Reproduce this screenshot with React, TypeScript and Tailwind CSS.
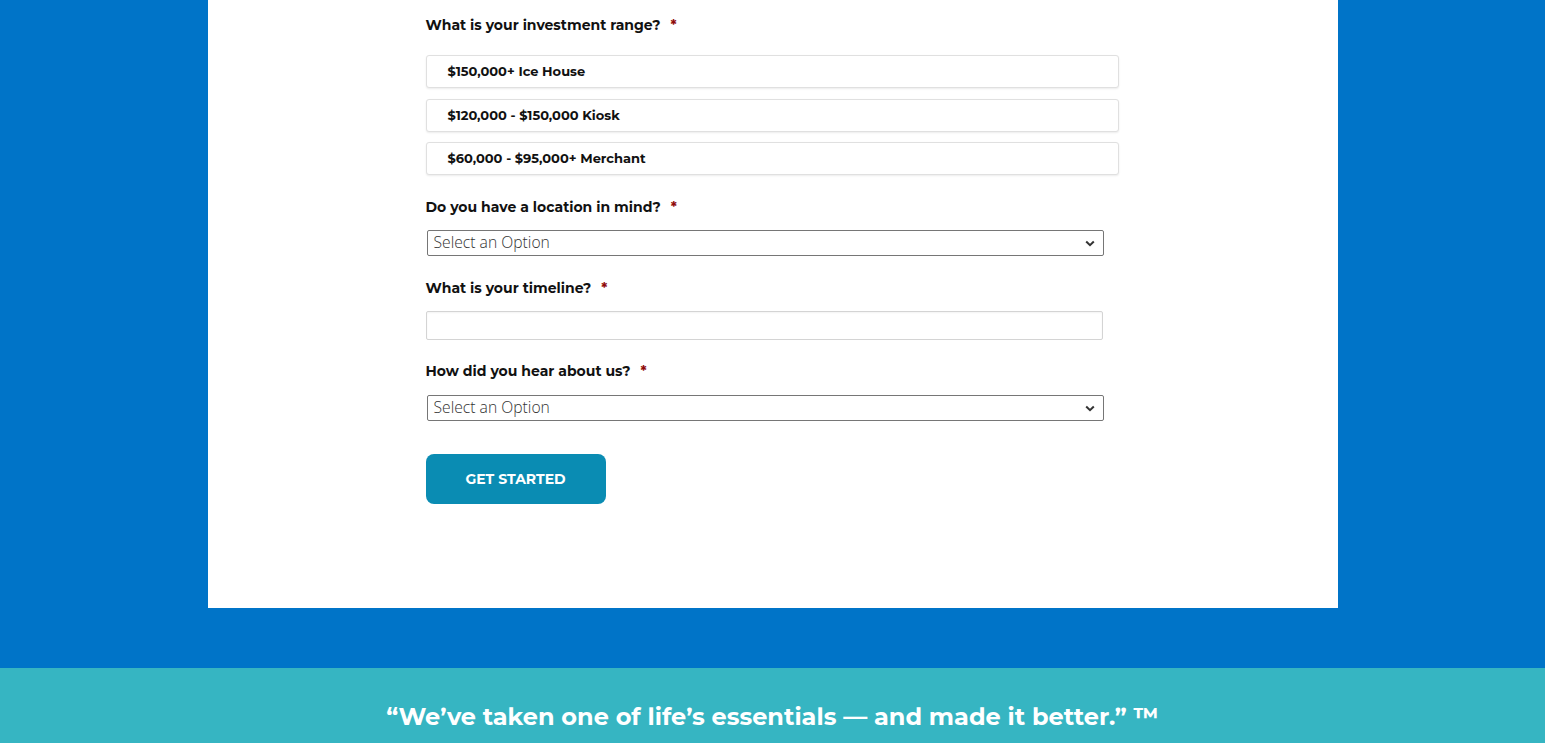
import React from "react";

const font = { fontFamily: "Montserrat, Inter, 'Open Sans', sans-serif" };

function Label({ text, className = "" }: { text: string; className?: string }) {
  return (
    <div className={`h-[20px] leading-[20px] text-[14px] font-bold text-[#111] ${className}`}>
      {text}
      <span className="ml-[10px] text-[#8f0a0a]">*</span>
    </div>
  );
}

function Option({ text, className = "" }: { text: string; className?: string }) {
  return (
    <div
      className={`h-[33px] w-[693px] flex items-center pl-[21px] border border-[#e0e0e0] rounded-[3px] bg-white shadow-[0_1px_2px_rgba(0,0,0,0.08)] text-[13px] font-bold text-[#111] ${className}`}
    >
      {text}
    </div>
  );
}

function Select({ className = "" }: { className?: string }) {
  return (
    <div
      className={`ml-[1px] h-[26px] w-[677px] flex items-center justify-between border border-[#767676] rounded-[2px] bg-white pl-[6px] pr-[8px] ${className}`}
    >
      <span className="text-[15.7px] text-[#333]" style={{ fontFamily: "'Open Sans', sans-serif", fontWeight: 300 }}>
        Select an Option
      </span>
      <svg width="10" height="7" viewBox="0 0 10 7" aria-hidden="true">
        <path d="M1.2 1.5 L5 5.2 L8.8 1.5" fill="none" stroke="#333" strokeWidth="2" />
      </svg>
    </div>
  );
}

export default function App() {
  return (
    <div className="min-h-[743px] bg-[#0074c8] overflow-hidden" style={font}>
      <div className="mx-auto w-[1130px] bg-white pt-[15px] pb-[104px] pl-[218px]">
        <Label text="What is your investment range?" />
        <Option text="$150,000+ Ice House" className="mt-[20px]" />
        <Option text="$120,000 - $150,000 Kiosk" className="mt-[11px]" />
        <Option text="$60,000 - $95,000+ Merchant" className="mt-[10px]" />
        <Label text="Do you have a location in mind?" className="mt-[22px]" />
        <Select className="mt-[13px]" />
        <Label text="What is your timeline?" className="mt-[22px]" />
        <div className="mt-[13px] h-[29px] w-[677px] border border-[#d4d4d4] rounded-[2px] bg-white shadow-[inset_0_1px_2px_rgba(0,0,0,0.05)]" />
        <Label text="How did you hear about us?" className="mt-[21px]" />
        <Select className="mt-[14px]" />
        <button className="mt-[33px] h-[50px] w-[180px] rounded-[8px] bg-[#0a8cb3] text-white text-[14px] font-bold uppercase">
          Get Started
        </button>
      </div>
      <div className="h-[60px]" />
      <div className="bg-[#36b5c2] pt-[34px] pb-[40px] text-center">
        <p className="text-white text-[24px] font-bold leading-[30px]">
          “We’ve taken one of life’s essentials — and made it better.” ™
        </p>
      </div>
    </div>
  );
}
